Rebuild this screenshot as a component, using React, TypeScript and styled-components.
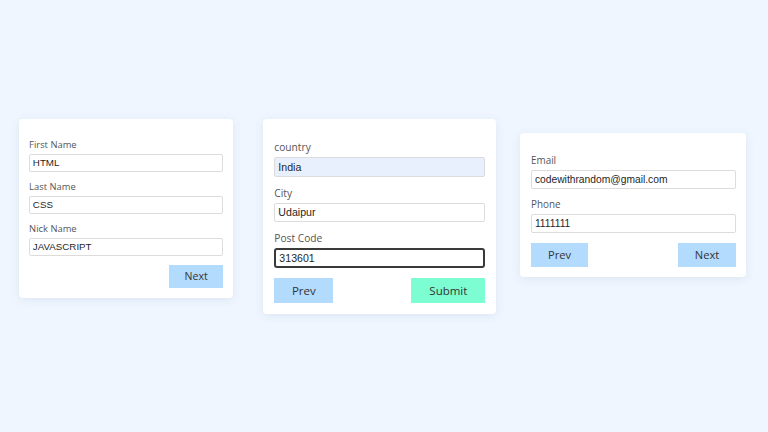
import React from "react";
import styled, { createGlobalStyle } from "styled-components";

const GlobalStyle = createGlobalStyle`
  html, body {
    margin: 0;
    padding: 0;
    background: #eff6ff;
  }
  * {
    box-sizing: border-box;
  }
`;

const Page = styled.div`
  display: flex;
  align-items: flex-start;
  width: 768px;
  height: 432px;
  padding-left: 19px;
  background: #eff6ff;
  overflow: hidden;
`;

// every size inside a card is multiplied by --k, so one card can sit a bit smaller
const Card = styled.div<{ $scale: number; $top: number; $gap: number }>`
  --k: ${(p) => p.$scale};
  width: calc(233px * var(--k));
  margin-top: ${(p) => p.$top}px;
  margin-left: ${(p) => p.$gap}px;
  padding: calc(22px * var(--k)) calc(11px * var(--k)) calc(11px * var(--k));
  background: #ffffff;
  border-radius: 4px;
  box-shadow: 0 2px 10px rgba(60, 90, 130, 0.1);
`;

const Field = styled.div`
  margin-bottom: calc(10px * var(--k));
`;

const Label = styled.label`
  display: block;
  font-family: "Open Sans", "Noto Sans", sans-serif;
  font-size: calc(10.2px * var(--k));
  line-height: calc(13px * var(--k));
  color: #555;
  margin-bottom: calc(3px * var(--k));
`;

const Input = styled.input<{ $filled?: boolean; $focused?: boolean }>`
  display: block;
  width: 100%;
  height: calc(19.5px * var(--k));
  padding: 0 calc(3px * var(--k));
  font-family: "Liberation Sans", Arial, sans-serif;
  font-size: calc(10.6px * var(--k));
  color: #1f1f1f;
  background: ${(p) => (p.$filled ? "#e8f0fe" : "#ffffff")};
  border: ${(p) => (p.$focused ? "2px solid #3a3a3a" : "1px solid #dcdcdc")};
  border-radius: ${(p) => (p.$focused ? "3px" : "2px")};
  outline: none;
`;

const Actions = styled.div`
  display: flex;
  justify-content: space-between;
  margin-top: calc(2px * var(--k));
`;

const Button = styled.button<{ $submit?: boolean; $right?: boolean }>`
  width: calc(${(p) => (p.$submit ? 74 : 59)}px * var(--k));
  height: calc(25px * var(--k));
  margin-left: ${(p) => (p.$right ? "auto" : "0")};
  border: none;
  border-radius: 0;
  background: ${(p) => (p.$submit ? "#7dfdd2" : "#b3dbfe")};
  font-family: "Open Sans", "Noto Sans", sans-serif;
  font-size: calc(11.5px * var(--k));
  color: #333;
  cursor: pointer;
`;

type FieldData = { label: string; value: string; filled?: boolean; focused?: boolean };

const steps: {
  scale: number;
  top: number;
  gap: number;
  fields: FieldData[];
  prev: boolean;
  last: string;
}[] = [
  {
    scale: 0.92,
    top: 119,
    gap: 0,
    fields: [
      { label: "First Name", value: "HTML" },
      { label: "Last Name", value: "CSS" },
      { label: "Nick Name", value: "JAVASCRIPT" },
    ],
    prev: false,
    last: "Next",
  },
  {
    scale: 1,
    top: 119,
    gap: 30,
    fields: [
      { label: "country", value: "India", filled: true },
      { label: "City", value: "Udaipur" },
      { label: "Post Code", value: "313601", focused: true },
    ],
    prev: true,
    last: "Submit",
  },
  {
    scale: 0.97,
    top: 133,
    gap: 24,
    fields: [
      { label: "Email", value: "codewithrandom@gmail.com" },
      { label: "Phone", value: "1111111" },
    ],
    prev: true,
    last: "Next",
  },
];

export default function App() {
  return (
    <>
      <GlobalStyle />
      <Page>
        {steps.map((step, i) => (
          <Card key={i} $scale={step.scale} $top={step.top} $gap={step.gap}>
            {step.fields.map((f) => (
              <Field key={f.label}>
                <Label>{f.label}</Label>
                <Input
                  readOnly
                  defaultValue={f.value}
                  $filled={f.filled}
                  $focused={f.focused}
                />
              </Field>
            ))}
            <Actions>
              {step.prev && <Button>Prev</Button>}
              <Button $right $submit={step.last === "Submit"}>
                {step.last}
              </Button>
            </Actions>
          </Card>
        ))}
      </Page>
    </>
  );
}
